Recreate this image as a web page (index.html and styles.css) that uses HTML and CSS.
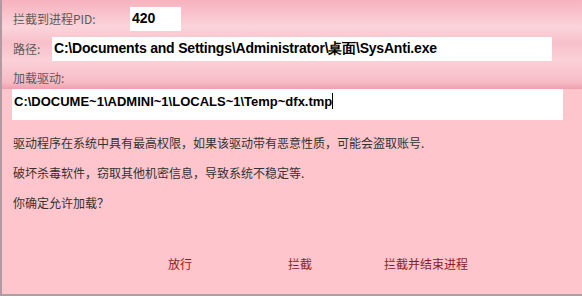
FILE: index.html
```html
<!DOCTYPE html>
<html>
<head>
  <meta charset="UTF-8">
  <meta name="viewport" content="width=device-width, initial-scale=1.0">
  <title>驱动加载拦截</title>
  <link rel="stylesheet" href="styles.css">
</head>
<body>
  <div class="dialog">
    <div class="top">
      <div class="row pid-row">
        <span class="label pid-label">拦截到进程PID:</span>
        <div class="field pid">420</div>
      </div>
      <div class="row path-row">
        <span class="label path-label">路径:</span>
        <div class="field path">C:\Documents and Settings\Administrator\桌面\SysAnti.exe</div>
      </div>
      <div class="label driver-label">加载驱动:</div>
    </div>

    <div class="field driver">C:\DOCUME~1\ADMINI~1\LOCALS~1\Temp~dfx.tmp<span class="caret"></span></div>

    <div class="message">
      <p>驱动程序在系统中具有最高权限，如果该驱动带有恶意性质，可能会盗取账号.</p>
      <p>破坏杀毒软件，窃取其他机密信息，导致系统不稳定等.</p>
      <p>你确定允许加载？</p>
    </div>

    <div class="actions">
      <a href="#" class="btn">放行</a>
      <a href="#" class="btn">拦截</a>
      <a href="#" class="btn">拦截并结束进程</a>
    </div>
  </div>
</body>
</html>
```

FILE: styles.css
```css
body {
  margin: 0;
  font-family: "Noto Sans CJK SC", sans-serif;
  font-size: 12px;
  background-color: #fff;
}

.dialog {
  width: 582px;
  height: 296px;
  border-left: 2px solid #b39aa2;
  border-bottom: 2px solid #a8a0a2;
  background-color: #ffc5cc;
  box-sizing: border-box;
  overflow: hidden;
}

.top {
  height: 89px;
  padding-top: 7px;
  box-sizing: border-box;
  background: linear-gradient(180deg, #f6b2bd 0%, #f9c6cf 18%, #fbd4da 30%, #f8c0ca 48%, #fbd0d7 68%, #f7bcc6 92%, #ee9fae 100%);
}

.row {
  display: flex;
  align-items: center;
  height: 24px;
}

.path-row {
  margin-top: 6px;
}

.label {
  color: #5a5a5a;
  padding-left: 11px;
  line-height: 16px;
}

.pid-label {
  width: 117px;
}

.path-label {
  width: 39px;
}

.driver-label {
  margin-top: 9px;
}

.field {
  background-color: #fff;
  font-family: "Liberation Sans", Arial, sans-serif;
  font-weight: bold;
  font-size: 14px;
  color: #000;
  height: 24px;
  line-height: 22px;
  padding-left: 2px;
  box-sizing: border-box;
}

.pid {
  width: 51px;
}

.path {
  width: 500px;
  letter-spacing: -0.2px;
}

.driver {
  margin-left: 10px;
  width: 551px;
  height: 31px;
  line-height: 26px;
  font-size: 13px;
}

.caret {
  display: inline-block;
  width: 1px;
  height: 16px;
  background-color: #000;
  vertical-align: -3px;
}

.message {
  padding: 8px 0 0 11px;
  color: #333;
}

.message p {
  margin: 0;
  line-height: 30px;
}

.actions {
  display: grid;
  grid-template-columns: 120px 96px auto;
  padding-left: 166px;
  margin-top: 38px;
}

.btn {
  color: #8b1c24;
  text-decoration: none;
  line-height: 16px;
}
```
